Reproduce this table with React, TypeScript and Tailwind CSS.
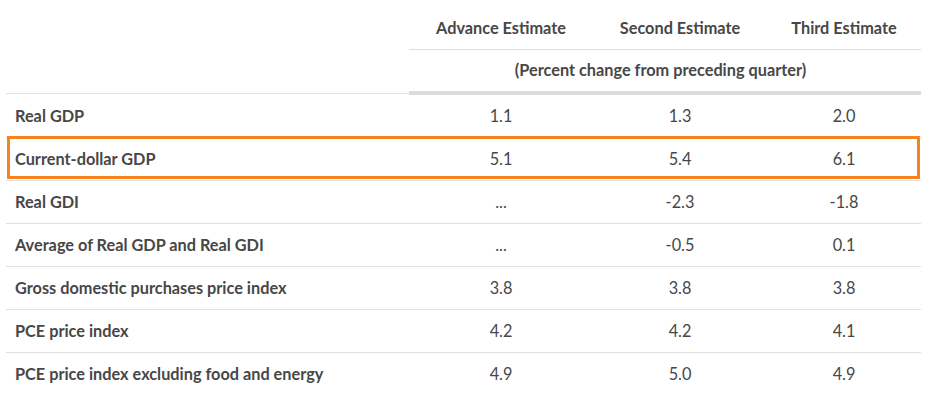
import React from "react";

const rows: { label: string; a: string; b: string; c: string; hl?: boolean }[] = [
  { label: "Real GDP", a: "1.1", b: "1.3", c: "2.0" },
  { label: "Current-dollar GDP", a: "5.1", b: "5.4", c: "6.1", hl: true },
  { label: "Real GDI", a: "...", b: "-2.3", c: "-1.8" },
  { label: "Average of Real GDP and Real GDI", a: "...", b: "-0.5", c: "0.1" },
  { label: "Gross domestic purchases price index", a: "3.8", b: "3.8", c: "3.8" },
  { label: "PCE price index", a: "4.2", b: "4.2", c: "4.1" },
  { label: "PCE price index excluding food and energy", a: "4.9", b: "5.0", c: "4.9" },
];

export default function App() {
  return (
    <div
      className="w-[931px] h-[418px] bg-white text-[#474747] pl-[6px] pr-[10px]"
      style={{ fontFamily: "Lato, 'Open Sans', sans-serif" }}
    >
      <div className="flex items-start">
        <div className="w-[403px] h-[94px] border-b border-[#e3e3e3]" />
        <div className="flex-1 flex flex-col">
          <div className="h-[50px] flex border-b border-[#dedede] text-[16.3px] font-bold pt-[8px]">
            <div className="w-[184px] flex items-center justify-center">Advance Estimate</div>
            <div className="w-[174px] flex items-center justify-center">Second Estimate</div>
            <div className="flex-1 flex items-center justify-center">Third Estimate</div>
          </div>
          <div className="h-[45px] flex items-center justify-center border-b-4 border-[#dbdbdb] text-[16.3px] font-bold pr-[9px] pb-[1px]">
            (Percent change from preceding quarter)
          </div>
        </div>
      </div>
      {rows.map((r, i) => (
        <div
          key={r.label}
          className={`relative h-[43px] flex items-center text-[16.3px] ${
            i < rows.length - 1 ? "border-b border-[#e0e0e0]" : ""
          }`}
        >
          <div className="w-[403px] pl-[9px] font-bold">{r.label}</div>
          <div className="w-[184px] text-center">{r.a}</div>
          <div className="w-[174px] text-center">{r.b}</div>
          <div className="flex-1 text-center">{r.c}</div>
          {r.hl && (
            <div className="absolute top-[-2px] bottom-[1px] left-[1px] right-[1px] border-[3px] border-[#f7821f] pointer-events-none" />
          )}
        </div>
      ))}
    </div>
  );
}
